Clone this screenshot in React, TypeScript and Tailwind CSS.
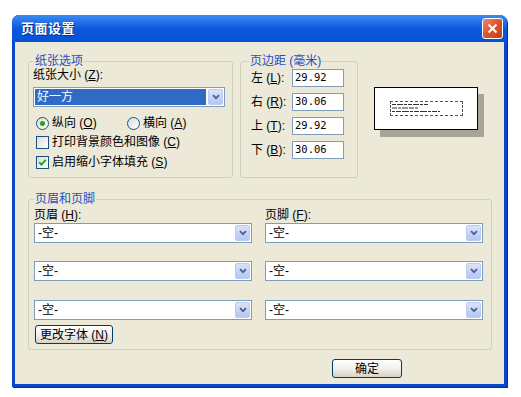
import React from 'react'

/**
 * XP-style "页面设置" dialog
 */

const font = "font-['Liberation_Sans','Noto_Sans_CJK_SC',sans-serif]"

function Acc({ label, k, colon = false }: { label: string; k: string; colon?: boolean }) {
    return (
        <span className="whitespace-nowrap">
            {label} (<span className="underline underline-offset-1">{k}</span>){colon ? ':' : ''}
        </span>
    )
}

function Chevron() {
    return (
        <svg width="8" height="6" viewBox="0 0 8 6">
            <path d="M1 1.2 L4 4.2 L7 1.2" fill="none" stroke="#4D6185" strokeWidth="1.8" />
        </svg>
    )
}

function ArrowButton() {
    return (
        <div className="w-[15px] h-[16px] my-[1px] mr-[1px] flex items-center justify-center rounded-[2px] border border-[#BACBEF] bg-gradient-to-b from-[#D9E3FB] to-[#B4C6F3]">
            <Chevron />
        </div>
    )
}

function Combo({ text, selected = false, className }: { text: string; selected?: boolean; className?: string }) {
    return (
        <div className={`h-[20px] flex items-stretch border border-[#7F9DB9] bg-white ${className ?? ''}`}>
            <div className={`flex-1 flex items-center px-[2px] my-[1px] ml-[1px] mr-[2px] leading-none ${selected ? 'bg-[#316AC5] text-white' : 'text-black'}`}>
                {text}
            </div>
            <ArrowButton />
        </div>
    )
}

function Radio({ checked }: { checked?: boolean }) {
    return (
        <div className="w-[13px] h-[13px] shrink-0 rounded-full border border-[#1C5180] bg-gradient-to-br from-[#DCDBD3] to-white flex items-center justify-center">
            {checked && <div className="w-[5px] h-[5px] rounded-full bg-[#21A121]" />}
        </div>
    )
}

function Check({ checked }: { checked?: boolean }) {
    return (
        <div className="w-[13px] h-[13px] shrink-0 border border-[#1C5180] bg-gradient-to-br from-[#DCDBD3] to-white flex items-center justify-center">
            {checked && (
                <svg width="9" height="9" viewBox="0 0 9 9">
                    <path d="M1.2 4.2 L3.4 6.6 L7.8 1.8" fill="none" stroke="#21A121" strokeWidth="1.8" />
                </svg>
            )}
        </div>
    )
}

function XpButton({ children, className }: { children: React.ReactNode; className?: string }) {
    return (
        <div className={`h-[19px] flex items-center justify-center rounded-[3px] border border-[#003C74] bg-gradient-to-b from-white via-[#F1F0EA] to-[#D8D3C6] text-black leading-none ${className ?? ''}`}>
            {children}
        </div>
    )
}

function MarginRow({ label, k, value }: { label: string; k: string; value: string }) {
    return (
        <div className="h-[18px] flex items-center">
            <div className="w-[51px] shrink-0 pl-[10px]">
                <Acc label={label} k={k} colon />
            </div>
            <div className="w-[52px] h-[18px] shrink-0 border border-[#7F9DB9] bg-white flex items-center px-[2px] font-['DejaVu_Sans_Mono',monospace] text-[10.5px]">
                {value}
            </div>
        </div>
    )
}

export default function App() {
    return (
        <div className={`w-[521px] h-[397px] bg-white pt-[15px] pl-[12px] overflow-hidden text-[12px] text-black ${font}`}>
            <div className="w-[495px] h-[372px] flex flex-col rounded-t-[7px] bg-[#0A47C8] shadow-[1px_1px_0_#0B2F8A]">
                {/* Title bar */}
                <div className="h-[27px] flex items-center justify-between pl-[9px] pr-[4px] rounded-t-[7px] bg-gradient-to-b from-[#3C8AF5] via-[#0A5ADC] to-[#0652D6]">
                    <span className="text-white font-bold text-[13px] tracking-[0.5px] [text-shadow:1px_1px_0_#0A2F8A]">页面设置</span>
                    <div className="w-[21px] h-[21px] rounded-[3px] border border-white bg-gradient-to-br from-[#E88A6C] via-[#D9532E] to-[#C23E1A] flex items-center justify-center">
                        <svg width="11" height="11" viewBox="0 0 11 11">
                            <path d="M1.5 1.5 L9.5 9.5 M9.5 1.5 L1.5 9.5" stroke="white" strokeWidth="2" />
                        </svg>
                    </div>
                </div>

                {/* Body */}
                <div className="flex-1 mx-[3px] mb-[3px] bg-[#ECE9D8] flex flex-col">
                    <div className="flex pl-[13px] pt-[12px]">
                        {/* 纸张选项 */}
                        <fieldset className="w-[205px] h-[124px] border border-[#D0D0BF] rounded-[3px]">
                            <legend className="ml-[5px] px-[1px] leading-[14px] text-[#1C50C3]">纸张选项</legend>
                            <div className="pl-[4px] leading-[14px]">
                                <Acc label="纸张大小" k="Z" colon />
                            </div>
                            <Combo text="好一方" selected className="mt-[5px] ml-[4px] w-[192px]" />
                            <div className="mt-[8px] h-[16px] flex items-center pl-[7px]">
                                <Radio checked />
                                <span className="ml-[3px] w-[75px]"><Acc label="纵向" k="O" /></span>
                                <Radio />
                                <span className="ml-[3px]"><Acc label="横向" k="A" /></span>
                            </div>
                            <div className="mt-[3px] h-[16px] flex items-center pl-[7px]">
                                <Check />
                                <span className="ml-[3px]"><Acc label="打印背景颜色和图像" k="C" /></span>
                            </div>
                            <div className="mt-[4px] h-[16px] flex items-center pl-[7px]">
                                <Check checked />
                                <span className="ml-[3px]"><Acc label="启用缩小字体填充" k="S" /></span>
                            </div>
                        </fieldset>

                        {/* 页边距 */}
                        <fieldset className="ml-[7px] w-[118px] h-[124px] border border-[#D0D0BF] rounded-[3px]">
                            <legend className="ml-[8px] px-[1px] leading-[14px] text-[#1C50C3]">页边距 (毫米)</legend>
                            <div className="mt-[1px] flex flex-col gap-[6px]">
                                <MarginRow label="左" k="L" value="29.92" />
                                <MarginRow label="右" k="R" value="30.06" />
                                <MarginRow label="上" k="T" value="29.92" />
                                <MarginRow label="下" k="B" value="30.06" />
                            </div>
                        </fieldset>

                        {/* Preview */}
                        <div className="ml-[16px] mt-[33px] w-[104px] h-[43px] bg-white border border-black shadow-[6px_7px_0_#A9A596] flex items-center justify-center">
                            <div className="w-[73px] h-[15px] border border-dashed border-[#555] flex items-center pl-[1px]">
                                <svg width="60" height="11" viewBox="0 0 60 11">
                                    <path d="M0 1.5 H36" stroke="#333" strokeWidth="1" strokeDasharray="4 1 6 1 3 1" />
                                    <path d="M0 5 H26" stroke="#333" strokeWidth="1" strokeDasharray="5 1 3 1 6 1" />
                                    <path d="M0 8.5 H48" stroke="#333" strokeWidth="1" strokeDasharray="3 1 5 1 7 1" />
                                </svg>
                            </div>
                        </div>
                    </div>

                    {/* 页眉和页脚 */}
                    <fieldset className="ml-[13px] mt-[14px] w-[464px] h-[158px] border border-[#D0D0BF] rounded-[3px]">
                        <legend className="ml-[5px] px-[1px] leading-[14px] text-[#1C50C3]">页眉和页脚</legend>
                        <div className="mt-[2px] flex pl-[5px] leading-[14px]">
                            <div className="w-[231px]"><Acc label="页眉" k="H" colon /></div>
                            <div><Acc label="页脚" k="F" colon /></div>
                        </div>
                        <div className="mt-[1px] flex gap-[13px] pl-[5px]">
                            <Combo text="-空-" className="w-[218px]" />
                            <Combo text="-空-" className="w-[218px]" />
                        </div>
                        <div className="mt-[18px] flex gap-[13px] pl-[5px]">
                            <Combo text="-空-" className="w-[218px]" />
                            <Combo text="-空-" className="w-[218px]" />
                        </div>
                        <div className="mt-[19px] flex gap-[13px] pl-[5px]">
                            <Combo text="-空-" className="w-[218px]" />
                            <Combo text="-空-" className="w-[218px]" />
                        </div>
                        <XpButton className="mt-[5px] ml-[6px] w-[78px]">
                            <Acc label="更改字体" k="N" />
                        </XpButton>
                    </fieldset>

                    <div className="mt-[9px] pl-[317px]">
                        <XpButton className="w-[70px]">确定</XpButton>
                    </div>
                </div>
            </div>
        </div>
    )
}
